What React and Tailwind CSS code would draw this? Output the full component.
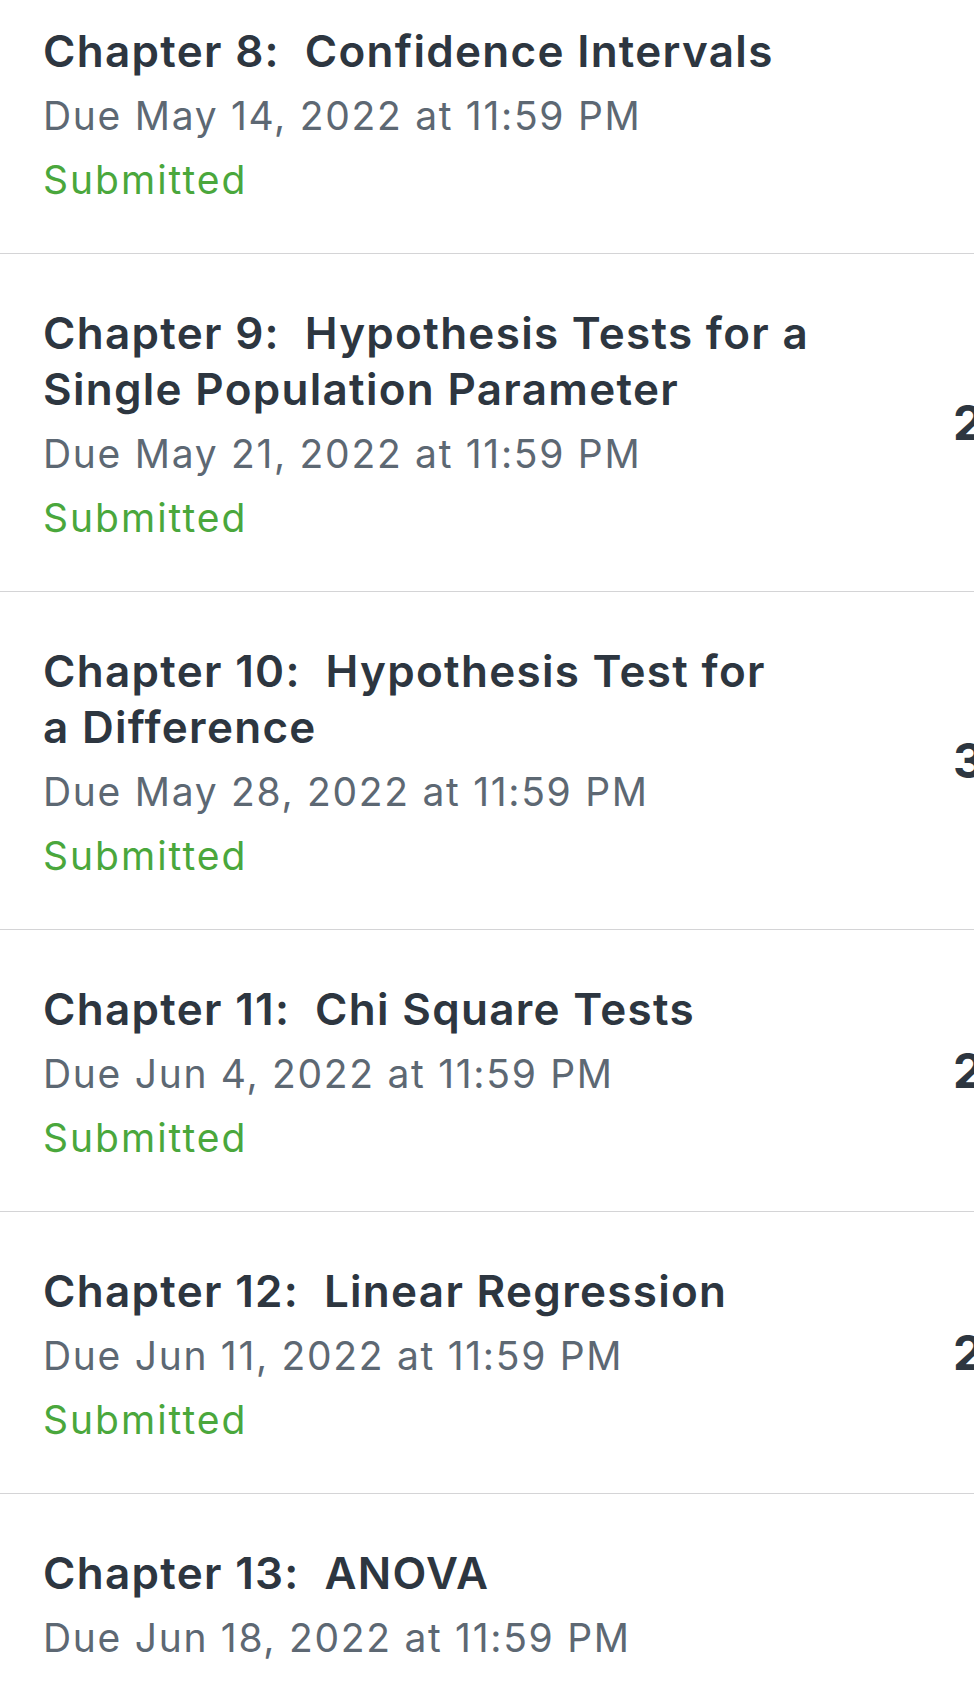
import React from 'react'

const rows = [
  { title: ['Chapter 8:  Confidence Intervals'], due: 'Due May 14, 2022 at 11:59 PM', score: '' },
  { title: ['Chapter 9:  Hypothesis Tests for a', 'Single Population Parameter'], due: 'Due May 21, 2022 at 11:59 PM', score: '2' },
  { title: ['Chapter 10:  Hypothesis Test for', 'a Difference'], due: 'Due May 28, 2022 at 11:59 PM', score: '3' },
  { title: ['Chapter 11:  Chi Square Tests'], due: 'Due Jun 4, 2022 at 11:59 PM', score: '2' },
  { title: ['Chapter 12:  Linear Regression'], due: 'Due Jun 11, 2022 at 11:59 PM', score: '2' },
  { title: ['Chapter 13:  ANOVA'], due: 'Due Jun 18, 2022 at 11:59 PM', score: '' },
]

function Row({ row, first }){
  return (
    <div className={`grid grid-cols-[953px_1fr] items-center ${first ? '' : 'border-t border-[#d4d4d6]'}`}>
      <div className="pl-[43px] pt-[51px] pb-[42px]">
        {row.title.map((line, i) => (
          <div key={i} className="text-[44px] leading-[56px] font-semibold tracking-[1.3px] text-[#2d3640] whitespace-pre">{line}</div>
        ))}
        <div className="mt-[5px] text-[39px] leading-[63.5px] tracking-[1.7px] text-[#5d6873] whitespace-pre">{row.due}</div>
        <div className="text-[39px] leading-[63.5px] tracking-[2px] text-[#4aa73c]">Submitted</div>
      </div>
      <div className="text-[48px] font-bold text-[#2d3640] whitespace-nowrap">{row.score}</div>
    </div>
  )
}

export default function App(){
  return (
    <div className="h-screen overflow-hidden bg-white font-['Inter',sans-serif]">
      <div className="-mt-[28px]">
        {rows.map((r, i) => <Row key={i} row={r} first={i === 0} />)}
      </div>
    </div>
  )
}
